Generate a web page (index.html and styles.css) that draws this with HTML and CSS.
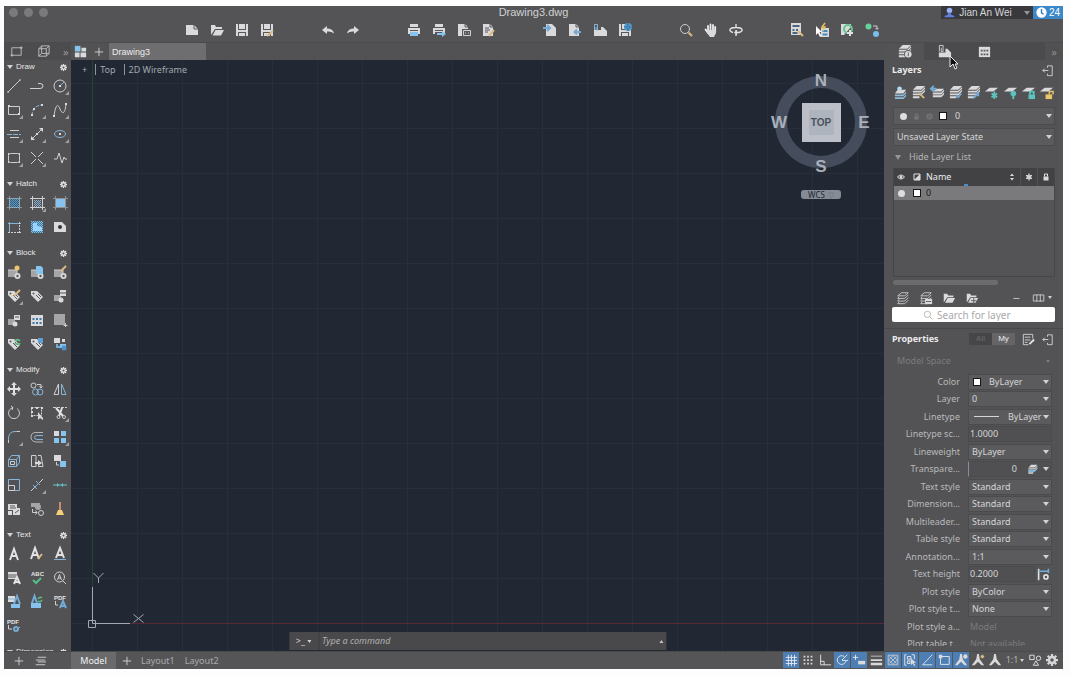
FILE: index.html
```
<!DOCTYPE html>
<html lang="en">
<head>
<meta charset="utf-8">
<title>Drawing3.dwg</title>
<link rel="stylesheet" href="styles.css">
</head>
<body>
<svg class="defs" aria-hidden="true">
  <symbol id="gear" viewBox="0 0 16 16"><circle cx="8" cy="8" r="4" fill="none" stroke="currentColor" stroke-width="3.4"/><path d="M8 0v3M8 13v3M0 8h3M13 8h3M2.3 2.3l2 2M11.7 11.7l2 2M13.7 2.3l-2 2M4.3 11.7l-2 2" stroke="currentColor" stroke-width="3"/></symbol>
  <symbol id="stack" viewBox="0 0 16 16"><path class="k" d="M6 2h8l-4 3.500H2zM3.500 6.500L2 8.500h8l4-4M3.500 9.500L2 11.500h8l4-4M3.500 12.500L2 14.500h8l4-4"/></symbol>
  <symbol id="stackf" viewBox="0 0 16 16"><path class="f" d="M6 1h9l-4 4H2zM2 6h9l4-4v2l-4 4H2zM2 9h9l4-4v2l-4 4H2zM2 12h7v2H2z"/></symbol>
  <symbol id="sheet1" viewBox="0 0 16 16"><path class="f" d="M6 3h9l-5 4H1z"/></symbol>
  <symbol id="tag" viewBox="0 0 16 16"><path class="f" d="M2 3h6l6 6-5 5-7-7z"/><circle class="h" cx="4.500" cy="5.500" r="1"/><path class="hs" d="M7 7l4 4M9 6l3 3"/></symbol>
  <symbol id="block" viewBox="0 0 16 16"><path class="m" d="M2 6h9v7H2z"/><circle class="f" cx="11.500" cy="12" r="3"/><circle class="h" cx="11.500" cy="12" r="1.200"/><path class="k" d="M2 6h9v4"/></symbol>
  <symbol id="floppy" viewBox="0 0 16 16"><path class="f" d="M2 2h12v12H2z"/><path class="h" d="M4 2h1v5h6V2h1v6H4zM4 10h8v4h-1v-3H5v3H4z"/></symbol>
  <symbol id="doc" viewBox="0 0 16 16"><path class="f" d="M2 2h7l3 3v9H2z"/><path class="hs" d="M9 2v3h3"/></symbol>
  <symbol id="printer" viewBox="0 0 16 16"><path class="f" d="M4 2h8v3H4zM2 6h12v6H2z"/><path class="h" d="M4 8h8v1H4z"/></symbol>
  <symbol id="pin" viewBox="0 0 16 16"><path class="k" d="M8 5V3h5v10.500H8v-2M9 8H3M5 6L3 8l2 2"/></symbol>
  <symbol id="hatchbox" viewBox="0 0 16 16"><path class="k" d="M3.500 1v14M13.500 1v14M1 3.500h15M1 12.500h15"/></symbol>
  <symbol id="person" viewBox="0 0 16 16"><path class="f" d="M7 1h2l1 6 5 7h-3L8 10l-4 4H1l5-7z"/></symbol>
  <pattern id="dots" width="2" height="2" patternUnits="userSpaceOnUse"><path d="M0 0h1v1H0zM1 1h1v1H1z" fill="#86b9dc"/></pattern>
</svg>

<div class="window">
  <header class="titlebar">
    <div class="lights"><span></span><span></span><span></span></div>
    <h1 class="doc-title">Drawing3.dwg</h1>
    <div class="account">
      <button class="user"><svg viewBox="0 0 16 16" class="ico12"><circle cx="8" cy="5" r="4" fill="#9ab0f0"/><path d="M6 8h4v3l5 2v2H1v-2l5-2z" fill="#5f7fe0"/></svg>Jian An Wei<i class="caret"></i></button>
      <button class="trial"><svg viewBox="0 0 16 16" class="ico12"><circle cx="8" cy="8" r="7.500" fill="#fff"/><path d="M8 3v5.500l3 2" fill="none" stroke="#2f80c2" stroke-width="2"/></svg>24</button>
    </div>
  </header>

  <nav class="toolbar" aria-label="Main toolbar">
    <div class="group">
      <button aria-label="New"><svg viewBox="0 0 16 16"><path class="f" d="M2 3h8l4 4v6H2z"/><path class="hs" d="M10 3v4h4"/></svg></button>
      <button aria-label="Open"><svg viewBox="0 0 16 16"><path class="f" d="M2 13V3h4l1 2h6v2H6zM6.500 8H15l-3 5.500H3.500z"/></svg></button>
      <button aria-label="Save"><svg viewBox="0 0 16 16"><use href="#floppy"/></svg></button>
      <button aria-label="Save as"><svg viewBox="0 0 16 16"><use href="#floppy"/><path class="ys" d="M8 14l6-5"/></svg></button>
    </div>
    <div class="group">
      <button aria-label="Undo"><svg viewBox="0 0 16 16"><path class="f" d="M2 8l5-4v2.500q6 0 7 5Q11 9 7 9.500V12z"/></svg></button>
      <button aria-label="Redo"><svg viewBox="0 0 16 16"><path class="f" d="M14 8L9 4v2.500q-6 0-7 5Q5 9 9 9.500V12z"/></svg></button>
    </div>
    <div class="group">
      <button aria-label="Print"><svg viewBox="0 0 16 16"><use href="#printer"/><path class="b" d="M4 10h8v4H4z"/></svg></button>
      <button aria-label="Batch plot"><svg viewBox="0 0 16 16"><use href="#printer"/><path class="h" d="M4 10h8v2H4z"/><path class="b" d="M6 11h5V9l4 3-4 3v-2H6z"/></svg></button>
      <button aria-label="Page setup"><svg viewBox="0 0 16 16"><use href="#doc"/><path class="h" d="M6 7h9v8H6z"/><path class="k" d="M7.500 8.500h7v5h-7zM9 11h1M12 11h1"/></svg></button>
      <button aria-label="Edit page"><svg viewBox="0 0 16 16"><use href="#doc"/><path class="hs" d="M4 6h4M4 8h5M4 10h3"/><path class="ys" d="M8 14l5-6"/></svg></button>
    </div>
    <div class="group">
      <button aria-label="Import"><svg viewBox="0 0 16 16"><path class="f" d="M4 2h6l4 4v8H4z"/><path class="bs2" d="M1 6h7M5 3l3 3-3 3"/></svg></button>
      <button aria-label="Export"><svg viewBox="0 0 16 16"><use href="#doc"/><path class="bs2" d="M7 10h7M10 7.500L7.500 10l2.500 2.500"/></svg></button>
      <button aria-label="Attach"><svg viewBox="0 0 16 16"><path class="f" d="M2 8h7V5h2l4 4v5H2z"/><path class="bs" d="M2.500 8V2.500h3V8H4V5"/></svg></button>
      <button aria-label="Save to web"><svg viewBox="0 0 16 16"><use href="#floppy"/><circle cx="11" cy="5" r="4" fill="#599bcb"/><path d="M7 5h8M11 1q-3 4 0 8 3-4 0-8" fill="none" stroke="#3c7cad"/></svg></button>
    </div>
    <div class="group">
      <button aria-label="Zoom"><svg viewBox="0 0 16 16"><circle class="k" cx="7" cy="7" r="4.500"/><path class="ys" d="M10.500 10.500L14 14"/></svg></button>
      <button aria-label="Pan"><svg viewBox="0 0 16 16"><path d="M5 10V4M7.500 9V2.500M10 9V3M12.200 10V5M5 11L2.500 7.500" fill="none" stroke="#eee" stroke-width="1.800" stroke-linecap="round"/><path class="f" d="M4 8h9v3l-2 4H7l-3-4z"/></svg></button>
      <button aria-label="Orbit"><svg viewBox="0 0 16 16"><path d="M5 10.500C0 9 1 5.500 8 5.500s8 3.500 3 5H7M9 8.500l-2 2 2 2M8 2v3M8 8v6" fill="none" stroke="#e2e2e3" stroke-width="1.400"/></svg></button>
    </div>
    <div class="group">
      <button aria-label="Sheet list"><svg viewBox="0 0 16 16"><path class="f" d="M2 1h10v12H2z"/><path d="M3.500 3h7v2h-7zM3.500 7h2v2h-2zM7 7h2v2H7zM3.500 10h5v2h-5z" fill="#4c6680"/><path class="ys" d="M9 9l5 5"/></svg></button>
      <button aria-label="Quick select"><svg viewBox="0 0 16 16"><path class="f" d="M7 6h8v9H7z"/><path d="M8.500 8h5v2h-5zM8.500 11.500h5v2h-5z" fill="#438cc0"/><path d="M11 1L8 5h3l-2 4" fill="none" stroke="#edc15d" stroke-width="1.500"/><path d="M2 4v9l2-2 2 4 1.500-1-2-4H8z" fill="#fff"/></svg></button>
      <button aria-label="Refresh"><svg viewBox="0 0 16 16"><path class="f" d="M2 2h10v3L5 13H2z"/><circle cx="9" cy="7" r="4" fill="none" stroke="#66c690" stroke-width="2"/><path class="k2" d="M11 8v6M8 11h6"/></svg></button>
      <button aria-label="Share"><svg viewBox="0 0 16 16"><circle cx="4.500" cy="4.500" r="3" fill="#66d29b"/><circle cx="12" cy="12" r="3" fill="#79bfec"/><path class="k" d="M9 4h4v3M11.500 6l1.500 1.500L14.500 6"/></svg></button>
    </div>
  </nav>

  <div class="work">
    <aside class="palette">
      <div class="tool-tabs">
        <button aria-label="2D tools"><svg viewBox="0 0 16 16"><path class="k" d="M3 4h10v8H3zM1.500 12h3M11.500 4h3M3 10.500v3M13 2.500v3"/></svg></button>
        <button aria-label="3D tools"><svg viewBox="0 0 16 16"><path class="k" d="M3 5h8v8H3zM3 5l3-3h8l-3 3M14 2v8l-3 3M6 2v8h8M6 10l-3 3"/></svg></button>
        <button class="more" aria-label="More">»</button>
      </div>
      <div class="sections">
        <section>
          <h2><i class="caret"></i>Draw<svg class="gear"><use href="#gear"/></svg></h2>
          <div class="tools">
            <button aria-label="Line"><svg viewBox="0 0 16 16"><path class="k" d="M2 14L14 2M1 14h2M13 2h2"/></svg></button>
            <button aria-label="Polyline"><svg viewBox="0 0 16 16"><path class="k" d="M1 10.500h10q3 0 3-2.500t-3-2.500H9"/></svg></button>
            <button class="fly" aria-label="Circle"><svg viewBox="0 0 16 16"><circle class="k" cx="8" cy="8" r="6"/><path class="bs" d="M8 8l4-4"/><path class="f" d="M7 7h2v2H7z"/></svg></button>
            <button class="fly" aria-label="Rectangle"><svg viewBox="0 0 16 16"><path class="k" d="M2.500 4.500h11v8h-11z"/><path class="f" d="M2 3h2v2H2zM12 11h2v2h-2z"/></svg></button>
            <button class="fly" aria-label="Arc"><svg viewBox="0 0 16 16"><path class="bs" d="M3 14Q3 4 13 3" stroke-dasharray="4 1"/><path class="f" d="M2 12h2v2H2zM4 6h2v2H4zM12 2h2v2h-2z"/></svg></button>
            <button class="fly" aria-label="Spline"><svg viewBox="0 0 16 16"><path class="k" d="M2 14C4 1 6 2 8 7s5 6 6-5"/><path class="f" d="M1 13h2v2H1zM13 1h2v2h-2z"/></svg></button>
            <button class="fly" aria-label="Construction line"><svg viewBox="0 0 16 16"><path class="k" d="M4 4.500h9M4 11.500h9"/><path class="bs" d="M1 8.500h14" stroke-dasharray="5 1"/></svg></button>
            <button class="fly" aria-label="Ray"><svg viewBox="0 0 16 16"><path class="k" d="M3 13L13 3"/><path class="f" d="M2 14v-4l4 4zM14 2v4l-4-4zM7 7h2v2H7z"/></svg></button>
            <button class="fly" aria-label="Ellipse"><svg viewBox="0 0 16 16"><ellipse class="bs" cx="8" cy="8" rx="5.500" ry="3.500"/><path class="f" d="M7 7h2v2H7z"/></svg></button>
            <button class="fly" aria-label="Region"><svg viewBox="0 0 16 16"><rect class="k" x="2.500" y="3.500" width="11" height="9" rx="2"/><path class="f" d="M2 3h1v2H2zM13 3h1v2h-1zM2 11h1v2H2zM13 11h1v2h-1z"/></svg></button>
            <button class="fly" aria-label="Point"><svg viewBox="0 0 16 16"><path class="k" d="M2 2l5 5M14 2L9 7M2 14l5-5M14 14L9 9"/></svg></button>
            <button aria-label="Break line"><svg viewBox="0 0 16 16"><path class="k" d="M2 9h3l2-6 3 10 2-6 1 2h2"/></svg></button>
          </div>
        </section>
        <section>
          <h2><i class="caret"></i>Hatch<svg class="gear"><use href="#gear"/></svg></h2>
          <div class="tools">
            <button aria-label="Hatch"><svg viewBox="0 0 16 16"><rect x="3" y="3" width="11" height="10" fill="#2f5f80"/><rect x="3" y="3" width="11" height="10" fill="url(#dots)" opacity=".6"/><use class="faint" href="#hatchbox"/></svg></button>
            <button class="fly" aria-label="Pick hatch"><svg viewBox="0 0 16 16"><rect x="5" y="5" width="7" height="7" fill="url(#dots)"/><use href="#hatchbox"/></svg></button>
            <button aria-label="Gradient"><svg viewBox="0 0 16 16"><path class="b" d="M4 4h9v8H4z"/><use class="faint" href="#hatchbox"/></svg></button>
            <button aria-label="Boundary"><svg viewBox="0 0 16 16"><path class="bs" d="M2 4.500h13M3.500 3v10"/><path class="k" d="M13.500 3v12M2 13.500h13" stroke-dasharray="2 1"/></svg></button>
            <button aria-label="Wipeout"><svg viewBox="0 0 16 16"><rect x="2" y="2" width="12" height="12" fill="#38799f"/><rect x="2" y="2" width="12" height="12" fill="url(#dots)"/><path d="M4 4h4v3l5 1v4H4z" fill="#9bd4ff"/></svg></button>
            <button aria-label="Revision cloud"><svg viewBox="0 0 16 16"><path class="f" d="M2 3h8l4 4v6H2z"/><circle cx="8" cy="8" r="2" fill="#333"/></svg></button>
          </div>
        </section>
        <section>
          <h2><i class="caret"></i>Block<svg class="gear"><use href="#gear"/></svg></h2>
          <div class="tools">
            <button aria-label="Create block"><svg viewBox="0 0 16 16"><use href="#block"/><circle cx="11" cy="4" r="2.500" fill="#efc56b"/></svg></button>
            <button aria-label="Insert block"><svg viewBox="0 0 16 16"><use href="#block"/><path class="b" d="M7 2h5l2 2v6H7z"/></svg></button>
            <button aria-label="Edit block"><svg viewBox="0 0 16 16"><use href="#block"/><path class="ys" d="M9 7l5-5"/></svg></button>
            <button class="fly" aria-label="Edit attribute"><svg viewBox="0 0 16 16"><use href="#tag"/><path class="ys" d="M8 8l6-6"/></svg></button>
            <button aria-label="Attribute"><svg viewBox="0 0 16 16"><use href="#tag"/></svg></button>
            <button aria-label="Extract"><svg viewBox="0 0 16 16"><path class="m" d="M2 7h7v6H2z"/><circle class="f" cx="9" cy="12" r="2.500"/><path class="f" d="M8 2h6v6H8z"/><path class="hs" d="M8 5h6"/></svg></button>
            <button aria-label="Write block"><svg viewBox="0 0 16 16"><path class="m" d="M2 7h7v6H2z"/><circle class="f" cx="9" cy="12" r="2.500"/><path class="f" d="M8 3h6v5H8z"/><path class="hs" d="M9 5h4"/></svg></button>
            <button aria-label="Table"><svg viewBox="0 0 16 16"><path class="f" d="M2 3h12v11H2z"/><path d="M3.500 6h2v2h-2zM7 6h2v2H7zM10.500 6h2v2h-2zM3.500 10h2v2h-2zM7 10h2v2H7zM10.500 10h2v2h-2z" fill="#3b78a3"/></svg></button>
            <button aria-label="Base point"><svg viewBox="0 0 16 16"><path class="m" d="M2 2h11v11H2z"/><path class="k" d="M13.500 11v4M11.500 13.500h4"/></svg></button>
            <button aria-label="Sync attributes"><svg viewBox="0 0 16 16"><use href="#tag"/><path d="M9 5a3 3 0 0 1 5 0M14 7a3 3 0 0 1-5 0" fill="none" stroke="#5fbc85" stroke-width="2"/></svg></button>
            <button aria-label="Manage attributes"><svg viewBox="0 0 16 16"><use href="#tag"/><path d="M9 2h5v5H9z" fill="#5c9fd0"/></svg></button>
            <button aria-label="Replace block"><svg viewBox="0 0 16 16"><path class="f" d="M2 2h6v5H2z"/><path class="bs2" d="M5 8v3h4"/><path class="f" d="M10 3h3v3h-3z"/><path class="b" d="M8 8h6v4H8z"/><circle cx="12" cy="12" r="2.500" fill="#4d94cb"/></svg></button>
          </div>
        </section>
        <section>
          <h2><i class="caret"></i>Modify<svg class="gear"><use href="#gear"/></svg></h2>
          <div class="tools">
            <button aria-label="Move"><svg viewBox="0 0 16 16"><path class="k2" d="M8 3v10M3 8h10"/><path class="f" d="M8 1l3 3H5zM8 15l3-3H5zM1 8l3-3v6zM15 8l-3-3v6z"/></svg></button>
            <button aria-label="Copy"><svg viewBox="0 0 16 16"><circle class="k" cx="4.500" cy="4.500" r="2.500"/><circle class="bs" cx="6.500" cy="11" r="3"/><circle class="bs" cx="11" cy="11" r="3"/><path class="k" d="M8 3.500h4v3M10.500 5l1.500 2 1.500-2"/></svg></button>
            <button aria-label="Mirror"><svg viewBox="0 0 16 16"><path class="k" d="M6.500 3L2 13.500h4.500z"/><path class="bs" d="M9.500 3L14 13.500H9.500z"/></svg></button>
            <button aria-label="Rotate"><svg viewBox="0 0 16 16"><path class="k" d="M11 3.500a5.500 5.500 0 1 1-6 0L7 2.500M5 1l2 1.500L6 5"/></svg></button>
            <button aria-label="Stretch"><svg viewBox="0 0 16 16"><path class="k" d="M2.500 2.500h10v8h-10z" stroke-dasharray="2 1"/><path class="f" d="M2 2h2v2H2zM7 2h2v2H7zM12 2h2v2h-2zM2 6h2v2H2zM2 10h2v2H2zM9 7v8l2-2 3 2v-2z"/></svg></button>
            <button class="fly" aria-label="Trim"><svg viewBox="0 0 16 16"><path class="k" d="M1 2.500h14" stroke-dasharray="3 1"/><path class="k2" d="M4 3l7 8M10 3l-3 8"/><circle class="k" cx="6.500" cy="12" r="1.500"/><circle class="k" cx="12" cy="12" r="1.500"/></svg></button>
            <button class="fly" aria-label="Fillet"><svg viewBox="0 0 16 16"><path class="bs" d="M2.500 14V9Q3 2.500 9 2.500h5"/><path class="k" d="M2.500 14v-3M11 2.500h3"/></svg></button>
            <button aria-label="Offset"><svg viewBox="0 0 16 16"><path class="k" d="M14 3.500H7Q2 3.500 2 8t5 5h7" opacity=".8"/><path class="bs" d="M14 6.500H8Q5.500 6.500 5.500 8.500T8 10.500h6"/></svg></button>
            <button class="fly" aria-label="Array"><svg viewBox="0 0 16 16"><path class="f" d="M2 2h5v5H2z"/><path class="b" d="M9 2h5v5H9zM2 9h5v5H2zM9 9h5v5H9z"/></svg></button>
            <button aria-label="Solid edit"><svg viewBox="0 0 16 16"><path class="bs" d="M2.500 6.500h8v7h-8zM2.500 6.500l3-4h8l-3 4M13.500 2.500v7l-3 4"/><path class="k" d="M4.500 8.500h4v3h-4z"/></svg></button>
            <button aria-label="Scale to"><svg viewBox="0 0 16 16"><path class="k" d="M2.500 2.500v11H7v-11zM9 2.500h3l2 11H9"/><path class="f" d="M6 9h3V7l4 3-4 3v-2H6z"/></svg></button>
            <button aria-label="Change space"><svg viewBox="0 0 16 16"><path class="f" d="M2 2h7v6H2z"/><path class="b" d="M8 8h6v6H8z"/><path class="k" d="M4.500 9v3H7"/></svg></button>
            <button aria-label="Scale"><svg viewBox="0 0 16 16"><path class="bs" d="M2.500 2.500h11v11h-11z"/><path class="k" d="M2.500 8.500h6v5h-6z"/></svg></button>
            <button class="fly" aria-label="Break"><svg viewBox="0 0 16 16"><path class="k" d="M2 14l4-4M10 6l4-4"/><path class="bs" d="M4 8l4 4M7 4l4 4M5 11l6-6"/></svg></button>
            <button aria-label="Join"><svg viewBox="0 0 16 16"><path d="M1 8h14" stroke="#64c7ba"/><path d="M5 6l2 2-2 2zM11 6L9 8l2 2z" fill="#6fc5d8"/></svg></button>
            <button aria-label="Draw order"><svg viewBox="0 0 16 16"><path class="f" d="M2 3h9v6H2z"/><path class="f" d="M7 7h7v7H7zM2 10h4v4H2z"/><path class="hs" d="M9 12l4-3M4 7h6M4 5h5"/></svg></button>
            <button aria-label="Explode"><svg viewBox="0 0 16 16"><path class="m" d="M2 2h9v4H2z"/><circle class="m" cx="9" cy="6" r="3"/><circle class="k" cx="12" cy="12" r="2.500"/><path class="k" d="M3.500 8v3.500H8M6.500 9.500l1.500 2-1.500 2"/></svg></button>
            <button aria-label="Purge"><svg viewBox="0 0 16 16"><path d="M8 1v8" stroke="#c88c71" stroke-width="2"/><path d="M6 9h4l2 5H4z" fill="#f3cf78"/></svg></button>
          </div>
        </section>
        <section>
          <h2><i class="caret"></i>Text<svg class="gear"><use href="#gear"/></svg></h2>
          <div class="tools">
            <button aria-label="Multiline text"><svg viewBox="0 0 16 16"><path class="k2" d="M4 14L8 3l4 11M5.500 10h5"/></svg></button>
            <button aria-label="Edit text"><svg viewBox="0 0 16 16"><path class="k2" d="M2 13L6 2l4 11M4 9h4"/><path class="ys" d="M9 13l4-5"/></svg></button>
            <button aria-label="Text style"><svg viewBox="0 0 16 16"><path class="k2" d="M4 12L8 2l4 10M5.500 9h5"/><path class="bs" d="M2 13.500h12"/></svg></button>
            <button aria-label="Align text"><svg viewBox="0 0 16 16"><path class="f" d="M2 2h9v7H2z"/><path class="hs" d="M2 5h9M2 7h9"/><path class="k2" d="M8 14l3-7 3 7M9 12h4"/></svg></button>
            <button aria-label="Spell check"><svg viewBox="0 0 16 16"><text x="2" y="6" class="mini">ABC</text><path d="M4 10l3 3 5-5" fill="none" stroke="#53bf87" stroke-width="2"/></svg></button>
            <button aria-label="Find text"><svg viewBox="0 0 16 16"><circle class="k" cx="7.500" cy="7" r="5"/><path class="k" d="M5.500 10l2-5.500 2 5.500M6 8h3M11 11l3 3"/></svg></button>
            <button aria-label="Text mask"><svg viewBox="0 0 16 16"><path class="f" d="M2 2h7v6H2z"/><path class="b" d="M5 10h9v4H5z"/><path class="bs2" d="M8 10l3-8 3 8"/><path class="bs" d="M2 5h7"/></svg></button>
            <button aria-label="Update field"><svg viewBox="0 0 16 16"><path class="b" d="M2 9h10v5H2z"/><path class="bs2" d="M3 9l2.500-7L8 9"/><path d="M9 5a2.500 2.500 0 0 1 4-1M13 6a2.500 2.500 0 0 1-4 1" fill="none" stroke="#58bc86" stroke-width="1.500"/></svg></button>
            <button aria-label="PDF text"><svg viewBox="0 0 16 16"><text x="2" y="6" class="mini">PDF</text><path class="k" d="M3.500 7v4H6"/><path class="bs2" d="M8 14l3-7 3 7M9 12h4"/></svg></button>
            <button aria-label="PDF import"><svg viewBox="0 0 16 16"><text x="1" y="6" class="mini">PDF</text><path class="k" d="M2.500 7v4H6"/><circle class="bs2" cx="10" cy="11" r="2"/><path class="bs" d="M10 13l4-4"/></svg></button>
          </div>
        </section>
        <section>
          <h2><i class="caret"></i>Dimension<svg class="gear"><use href="#gear"/></svg></h2>
        </section>
      </div>
    </aside>

    <main class="stage">
      <div class="file-tabs">
        <button aria-label="Start"><svg viewBox="0 0 16 16"><path class="b" d="M2 2h6v6H2z"/><path class="f" d="M9 4h5v4H9zM2 9h5v5H2zM8 9h6v5H8z"/></svg></button>
        <button aria-label="New tab"><svg viewBox="0 0 16 16"><path class="k" d="M8.500 4v9M4 8.500h9"/></svg></button>
        <button class="file-tab">Drawing3</button>
      </div>
      <div class="canvas">
        <div class="view-label"><span>+</span><span class="sep">Top</span><span class="sep">2D Wireframe</span></div>
        <div class="axis-y"></div>
        <div class="axis-x"></div>
        <svg class="ucs" viewBox="0 0 60 60"><path d="M9.500 10V46.500H47M5.500 43.500h7v7h-7zM10.500 -4l5 5 5-5M15.500 1v5M50.500 37.500l10 8M60.500 37.500l-10 8"/></svg>
        <svg class="compass" viewBox="0 0 104 126">
          <circle cx="52" cy="54" r="40" fill="none" stroke="#454d5d" stroke-width="12"/>
          <rect x="33" y="35" width="39" height="39" fill="#bdbfc8"/>
          <rect x="40" y="42" width="25" height="25" fill="#aeb4bd"/>
          <text x="52" y="58" class="cube">TOP</text>
          <text x="52" y="18">N</text><text x="52" y="104">S</text><text x="10" y="60">W</text><text x="95" y="60">E</text>
        </svg>
        <button class="wcs">WCS <span>▽</span></button>
        <form class="command">
          <button type="button" aria-label="Command options">&gt;_<i class="caret"></i></button>
          <input aria-label="Command" placeholder="Type a command">
          <i class="caret up"></i>
        </form>
      </div>
    </main>

    <aside class="panel">
      <div class="panel-tabs">
        <button class="on" aria-label="Layers panel"><svg viewBox="0 0 16 16"><use href="#stackf"/><circle class="h" cx="12" cy="11" r="4.500"/><circle class="f" cx="12" cy="11" r="3.500"/><path class="hs" d="M12 9v4"/></svg></button>
        <button aria-label="Attachments panel"><svg viewBox="0 0 16 16"><path class="f" d="M2 9h7V5h2l4 4v5H2z"/><path class="k" d="M2.500 8V1.500h4V8H4.500V4"/></svg></button>
        <button aria-label="Sheets panel"><svg viewBox="0 0 16 16"><path class="f" d="M2 3h12v11H2z"/><path class="h" d="M4 6h2v2H4zM7 6h2v2H7zM10 6h2v2h-2zM4 10h2v2H4zM7 10h2v2H7zM10 10h2v2h-2z"/></svg></button>
        <button class="more" aria-label="More panels">»</button>
      </div>
      <svg class="pointer" viewBox="0 0 10 15"><path d="M1 1v11l3-3 2 5 2-1-2-4h3z" fill="#111" stroke="#eee"/></svg>

      <section class="layers">
        <div class="head"><h2>Layers</h2><button aria-label="Undock"><svg viewBox="0 0 16 16"><use href="#pin"/></svg></button></div>
        <div class="layer-tools">
          <button aria-label="Match layer"><svg viewBox="0 0 16 16"><path d="M2 10h9l3-3v2l-3 3H2zM2 13h9l3-3v2l-3 3H2z" fill="#8dbbdc"/><path class="f" d="M5 5h9l-3 4H2z"/><circle cx="7" cy="4" r="2.500" fill="#b5d8ef"/></svg></button>
          <button aria-label="Clean layers"><svg viewBox="0 0 16 16"><use href="#stackf"/><path class="ys" d="M9 9l5 5"/></svg></button>
          <button aria-label="Previous layer"><svg viewBox="0 0 16 16"><path class="f" d="M7 4h8l-3 3H3zM3 8h9l3-3v2l-3 3H3zM3 11h9l3-3v2l-3 3H3z"/><path class="bs2" d="M1 4h6M4 1L1 4l3 3"/></svg></button>
          <button aria-label="Isolate"><svg viewBox="0 0 16 16"><use href="#stackf"/><path class="bs2" d="M9 11l2 2 3-4"/></svg></button>
          <button aria-label="Unisolate"><svg viewBox="0 0 16 16"><use href="#stackf"/><path class="bs2" d="M8 14l5-5M10 9h3v3"/></svg></button>
          <button aria-label="Freeze"><svg viewBox="0 0 16 16"><use href="#sheet1"/><path class="ts" d="M11 7v8M8 9l6 4M14 9l-6 4"/></svg></button>
          <button aria-label="Turn off"><svg viewBox="0 0 16 16"><use href="#sheet1"/><circle class="t" cx="11" cy="9" r="3"/><path class="t" d="M10 11h2v4h-2z"/></svg></button>
          <button aria-label="Lock"><svg viewBox="0 0 16 16"><use href="#sheet1"/><path class="t" d="M8 10h7v5H8z"/><path class="ts" d="M9.500 10V7h4v3"/></svg></button>
          <button aria-label="Unlock"><svg viewBox="0 0 16 16"><use href="#sheet1"/><path d="M7 10h7v5H7z" fill="#e9c66a"/><path d="M11 10V7h4v3" fill="none" stroke="#e9c66a" stroke-width="1.500"/></svg></button>
        </div>
        <div class="field layer-pick">
          <span class="dot"></span>
          <svg class="dimico" viewBox="0 0 16 16"><path class="f" d="M3 7h10v8H3z"/><path class="k2" d="M5 7V2h6v5"/></svg>
          <svg class="dimico"><use href="#gear"/></svg>
          <span class="swatch"></span>
          <select aria-label="Current layer"><option>0</option></select><i class="caret"></i>
        </div>
        <div class="field state"><select aria-label="Layer state"><option>Unsaved Layer State</option></select><i class="caret"></i></div>
        <button class="hide-list"><i class="caret"></i>Hide Layer List</button>
        <div class="layer-list">
          <table>
            <thead><tr>
              <th class="c-eye"><svg viewBox="0 0 16 16"><path class="k2" d="M1 8q7-8 14 0-7 8-14 0z"/><circle class="f" cx="8" cy="8" r="3"/></svg></th>
              <th class="c-sw"><svg viewBox="0 0 16 16"><path class="k2" d="M2 2h12v12H2z"/><path class="f" d="M14 2v12H2z"/></svg></th>
              <th class="c-name"><span>Name</span></th>
              <th class="c-sort"><svg viewBox="0 0 16 16"><path class="f" d="M8 1l4 5H4zM8 15l4-5H4z"/></svg></th>
              <th class="c-ico"><svg viewBox="0 0 16 16"><path class="k2" d="M8 1v14M2 4.500l12 7M14 4.500l-12 7"/><circle class="k2" cx="8" cy="8" r="4"/></svg></th>
              <th class="c-ico"><svg viewBox="0 0 16 16"><path class="f" d="M3 7h10v8H3z"/><path class="k2" d="M5 7V2h6v5"/></svg></th>
            </tr></thead>
            <tbody><tr><td><span class="dot"></span></td><td><span class="swatch"></span></td><td colspan="4">0</td></tr></tbody>
          </table>
        </div>
        <div class="scroll"><span></span></div>
        <div class="list-tools">
          <button aria-label="New layer"><svg viewBox="0 0 16 16"><use href="#stack"/></svg></button>
          <button aria-label="Layer settings"><svg viewBox="0 0 16 16"><use href="#stack"/><path class="f" d="M7 9h8v6H7z"/><path class="hs" d="M8 12h6"/></svg></button>
          <button aria-label="Open state"><svg viewBox="0 0 16 16"><path class="f" d="M2 13V3h4l1 2h6v2H6zM6.500 8H15l-3 5.500H3.500z"/></svg></button>
          <button aria-label="New group"><svg viewBox="0 0 16 16"><path class="f" d="M2 13V3h4l1 2h6v2H6zM6.500 8H15l-3 5.500H3.500z"/><path class="hs" d="M10 8v6M7 11h6"/></svg></button>
          <span class="grow"></span>
          <button aria-label="Remove layer"><svg viewBox="0 0 16 16"><path class="k" d="M5 8.500h7"/></svg></button>
          <button class="cols" aria-label="Columns"><svg viewBox="0 0 16 16"><path class="k" d="M1.500 4.500h12v7h-12zM5.500 4v8M9.500 4v8"/></svg><i class="caret"></i></button>
        </div>
        <label class="search"><svg viewBox="0 0 16 16"><circle cx="7" cy="7" r="5" fill="none" stroke="#aaa" stroke-width="1.300"/><path d="M11 11l4 4" stroke="#aaa" stroke-width="1.300"/></svg><input aria-label="Search for layer" placeholder="Search for layer"></label>
      </section>

      <section class="props">
        <div class="head"><h2>Properties</h2>
          <div class="seg"><button>All</button><button class="on">My</button></div>
          <button aria-label="Customize"><svg viewBox="0 0 16 16"><path class="k" d="M12.500 7V2.500h-10v11H8M4 5.500h6M4 8.500h6M4 11h3"/><path class="k2" d="M9 13l5-5"/></svg></button>
          <button aria-label="Undock"><svg viewBox="0 0 16 16"><use href="#pin"/></svg></button>
        </div>
        <div class="space"><select aria-label="Object type" disabled><option>Model Space</option></select><i class="caret"></i></div>
        <div class="rows">
          <div class="row"><label for="p1">Color</label><div class="field"><span class="swatch"></span><select id="p1"><option>ByLayer</option></select><i class="caret"></i></div></div>
          <div class="row"><label for="p2">Layer</label><div class="field"><select id="p2"><option>0</option></select><i class="caret"></i></div></div>
          <div class="row"><label for="p3">Linetype</label><div class="field"><span class="rule"></span><select id="p3"><option>ByLayer</option></select><i class="caret"></i></div></div>
          <div class="row"><label for="p4">Linetype sc...</label><div class="field in"><input id="p4" value="1.0000"></div></div>
          <div class="row"><label for="p5">Lineweight</label><div class="field"><select id="p5"><option>ByLayer</option></select><i class="caret"></i></div></div>
          <div class="row"><label for="p6">Transpare...</label><div class="field in slide"><input id="p6" class="right" value="0"><svg class="lay" viewBox="0 0 16 16"><use href="#stackf"/><path d="M2 9h9l4-4v2l-4 5H2z" fill="#79b3dc"/></svg><i class="caret"></i></div></div>
          <div class="row"><label for="p7">Text style</label><div class="field"><select id="p7"><option>Standard</option></select><i class="caret"></i></div></div>
          <div class="row"><label for="p8">Dimension...</label><div class="field"><select id="p8"><option>Standard</option></select><i class="caret"></i></div></div>
          <div class="row"><label for="p9">Multileader...</label><div class="field"><select id="p9"><option>Standard</option></select><i class="caret"></i></div></div>
          <div class="row"><label for="p10">Table style</label><div class="field"><select id="p10"><option>Standard</option></select><i class="caret"></i></div></div>
          <div class="row"><label for="p11">Annotation...</label><div class="field"><select id="p11"><option>1:1</option></select><i class="caret"></i></div></div>
          <div class="row"><label for="p12">Text height</label><div class="field in"><input id="p12" value="0.2000"></div><button class="measure" aria-label="Pick height"><svg viewBox="0 0 16 16"><path class="k2" d="M2 1v14"/><path class="bs2" d="M2 4h12M14 1v5"/><circle class="k2" cx="11" cy="11" r="2.500"/></svg></button></div>
          <div class="row"><label for="p13">Plot style</label><div class="field"><select id="p13"><option>ByColor</option></select><i class="caret"></i></div></div>
          <div class="row"><label for="p14">Plot style t...</label><div class="field"><select id="p14"><option>None</option></select><i class="caret"></i></div></div>
          <div class="row"><label for="p15">Plot style a...</label><div class="field off"><input id="p15" value="Model" disabled></div></div>
          <div class="row"><label for="p16">Plot table t...</label><div class="field off"><input id="p16" value="Not available" disabled></div></div>
        </div>
      </section>
    </aside>
  </div>

  <footer class="status">
    <div class="foot-left">
      <button aria-label="Add tool set"><svg viewBox="0 0 16 16"><path class="k" d="M8.500 4v9M4 8.500h9"/></svg></button>
      <button aria-label="Tool sets"><svg viewBox="0 0 16 16"><path class="k" d="M5 4.500h9M3 7.500h10M5 9.500h9M3 12.500h10"/></svg></button>
    </div>
    <nav class="layouts"><button class="on">Model</button><button class="add" aria-label="New layout"><svg viewBox="0 0 16 16"><path class="k" d="M8.500 4v9M4 8.500h9"/></svg></button><button>Layout1</button><button>Layout2</button></nav>
    <div class="modes">
      <button class="on" aria-label="Grid"><svg viewBox="0 0 16 16"><path class="w" d="M5 2v13M8.500 2v13M12 2v13M2 5h13M2 8.500h13M2 12h13"/></svg></button>
      <button aria-label="Snap"><svg viewBox="0 0 16 16"><path class="f" d="M3 3h2v2H3zM7 3h2v2H7zM11 3h2v2h-2zM3 7h2v2H3zM7 7h2v2H7zM11 7h2v2h-2zM3 11h2v2H3zM7 11h2v2H7zM11 11h2v2h-2z"/></svg></button>
      <button aria-label="Ortho"><svg viewBox="0 0 16 16"><path class="w" d="M3 2v11.500h12M3 9.500h4v4"/></svg></button>
      <button class="on" aria-label="Polar"><svg viewBox="0 0 16 16"><path class="w" d="M12.500 9a5 5 0 1 1-2-5M8 8l6-6M8 8.500h7"/></svg></button>
      <button class="on" aria-label="Dynamic input"><svg viewBox="0 0 16 16"><path class="w" d="M4 2v6M1 5h6"/><path class="f" d="M7 9h8v4H7z"/></svg></button>
      <button aria-label="Lineweight"><svg viewBox="0 0 16 16"><path class="f" d="M2 3h13v1H2zM2 7h13v2H2zM2 11h13v3H2z"/></svg></button>
      <button class="on" aria-label="Transparency"><svg viewBox="0 0 16 16"><path class="k" d="M2.500 2.500h11v11h-11zM4 4l8 8M8 3l5 5M3 8l5 5M12 4l-8 8M8 3L3 8M13 8l-5 5"/></svg></button>
      <button class="on" aria-label="Selection cycling"><svg viewBox="0 0 16 16"><path class="w" d="M4 2H2v12h2M10 2h3v5M5 4h4v3H5zM5 9h3v3H5z"/><path class="f" d="M9 6v8l2-2 2 3 1-1-2-3h3z"/></svg></button>
      <button class="on" aria-label="Angle snap"><svg viewBox="0 0 16 16"><path class="w" d="M14 2L3 13.500h11"/></svg></button>
      <button class="on" aria-label="Object snap"><svg viewBox="0 0 16 16"><path class="w" d="M4 4h10v9H4z"/><path class="f" d="M2 2h4v4H2z"/></svg></button>
      <button class="on" aria-label="Annotation visibility"><svg viewBox="0 0 16 16"><use href="#person"/><circle class="f" cx="13" cy="4" r="2.500"/></svg></button>
      <button aria-label="Auto scale"><svg viewBox="0 0 16 16"><use href="#person"/><path class="ys" d="M11 4h4M13 2v4"/></svg></button>
      <button aria-label="Annotation scale"><svg viewBox="0 0 16 16"><use href="#person"/></svg></button>
      <button class="scale">1:1<i class="caret"></i></button>
      <button aria-label="Isolate objects"><svg viewBox="0 0 16 16"><path class="w" d="M2 2.500h5v5H2zM9 9l3 5H6z"/><circle class="w" cx="12" cy="6" r="2.500"/></svg></button>
      <button aria-label="Settings"><svg class="big"><use href="#gear"/></svg></button>
    </div>
  </footer>
</div>
</body>
</html>
```
FILE: styles.css
```
* { box-sizing: border-box; }
html, body { height: 100%; }
body {
  margin: 0;
  padding: 6px 7px 6px 4px;
  background: #fdfdfe;
  color: #d6d6d8;
  font: 9px/12px "Noto Sans", "Open Sans", sans-serif;
  overflow: hidden;
}
h1, h2 { margin: 0; font-weight: 400; }
button, input, select {
  font: inherit;
  color: inherit;
  margin: 0;
  padding: 0;
  border: 0;
  background: none;
  outline: 0;
  appearance: none;
  min-width: 0;
}
button { display: inline-flex; align-items: center; justify-content: center; }
svg { display: block; width: 16px; height: 16px; flex: none; overflow: visible; }
.defs { position: absolute; width: 0; height: 0; }

/* icon paints */
.k, .k2, .w, .bs, .bs2, .ys, .ts, .hs { fill: none; stroke-width: 1px; }
.k { stroke: #cfcfd1; }
.k2 { stroke-width: 2px; stroke: #e2e2e3; }
.w { stroke: #ececee; }
.bs { stroke: #86b4d8; }
.bs2 { stroke-width: 2px; stroke: #72abd6; }
.ys { stroke: #dcb982; stroke-width: 2px; }
.ts { stroke: #5cc3bd; stroke-width: 2px; }
.hs { stroke: #58585a; }
.f { fill: #dadadc; stroke: none; }
.b { fill: #86c3ee; }
.m { fill: #a5a5a7; }
.t { fill: #5cc3bd; }
.h { fill: #58585a; }
.faint { opacity: .5; }
.mini { font: bold 6px "Liberation Sans", sans-serif; fill: #e4e4e4; }

.caret {
  flex: none;
  width: 0;
  height: 0;
  border: 3px solid transparent;
  border-top: 4px solid #d2d2d4;
  border-bottom: 0;
}
.caret.up { border-top: 0; border-bottom: 4px solid #c2c2c4; }

.window { height: 100%; display: flex; flex-direction: column; background: #545456; }

/* title bar */
.titlebar { flex: none; height: 13px; display: grid; grid-template-columns: 1fr auto 1fr; }
.lights { display: flex; align-items: center; gap: 6px; padding-left: 5px; }
.lights span { width: 9px; height: 9px; border-radius: 50%; background: #7a7a7c; }
.doc-title { font: 11px/13px "Liberation Sans", sans-serif; color: #d0d0d2; }
.account { justify-self: end; display: flex; font: 10px/13px "Liberation Sans", sans-serif; }
.user { width: 92px; gap: 4px; background: #39393d; }
.user .caret { margin-left: 8px; border-top-color: #969698; }
.trial { width: 30px; gap: 2px; background: #3a88c8; color: #fff; }
.ico12 { width: 11px; height: 11px; }

.toolbar { flex: none; height: 24px; display: flex; justify-content: center; align-items: center; gap: 45px; border-bottom: 1px solid #4b4b4d; padding: 0 4px 2px 0; }
.group { display: flex; gap: 9px; }

.work { flex: 1; min-height: 0; display: flex; }

/* tool palette */
.palette { flex: none; width: 67px; display: flex; flex-direction: column; background: #525254; }
.tool-tabs { flex: none; height: 17px; display: flex; gap: 12px; background: #4c4c4e; padding-left: 5px; }
.tool-tabs svg { width: 15px; height: 15px; }
.tool-tabs button { opacity: .85; }
.more { font-size: 11px; color: #a5a5a7; }
.sections { flex: 1; min-height: 0; overflow: hidden; }
.sections section { padding-bottom: 7px; }
.sections h2 { height: 14px; display: flex; align-items: center; gap: 3px; padding: 0 4px 0 3px; font: 8px/14px "Liberation Sans", sans-serif; color: #e6e6e8; }
.gear { width: 7px; height: 7px; margin-left: auto; }
.tools { display: grid; grid-template-columns: repeat(3, 16px); grid-auto-rows: 24px; column-gap: 7px; padding-left: 2px; }
.tools button { position: relative; }
.fly::after { content: ""; position: absolute; right: -1px; bottom: 3px; border: 2px solid #a0a0a2; border-top-color: transparent; border-left-color: transparent; }

/* drawing area */
.stage { flex: 1; min-width: 0; display: flex; flex-direction: column; }
.file-tabs { flex: none; height: 17px; display: flex; gap: 3px; padding-left: 2px; background: #525254; }
.file-tabs svg { width: 15px; height: 15px; }
.file-tab { width: 97px; justify-content: flex-start; padding-left: 3px; background: #6e6e70; color: #ededee; font-family: "Liberation Sans", sans-serif; }
.canvas {
  flex: 1;
  position: relative;
  overflow: hidden;
  background-color: #212833;
  background-image: linear-gradient(90deg, #27303a 1px, transparent 1px), linear-gradient(0deg, #27303a 1px, transparent 1px);
  background-size: 45px 45px;
  background-position: 21px 0, 0 calc(100% - 27px);
}
.view-label { display: flex; padding: 4px 0 0 11px; color: #a2a9b2; }
.view-label .sep { border-left: 1px solid #8d949d; padding-left: 4px; margin-left: 8px; height: 11px; line-height: 12px; }
.axis-y { position: absolute; left: 21px; top: 0; bottom: 27px; width: 1px; background: #25452f; }
.axis-x { position: absolute; left: 21px; right: 0; bottom: 27px; height: 1px; background: #5a2833; }
.ucs { position: absolute; left: 12px; bottom: 14px; width: 60px; height: 60px; fill: none; stroke: #a3a9b1; }
.compass { position: absolute; right: 11px; top: 8px; width: 104px; height: 126px; fill: #aab0ba; font: bold 17px "Liberation Sans", sans-serif; text-anchor: middle; }
.cube { fill: #4a515c; font-size: 10px; }
.wcs { position: absolute; right: 43px; top: 130px; width: 40px; height: 9px; gap: 3px; border-radius: 3px; background: #868c95; color: #20262f; font-size: 8px; line-height: 9px; }
.wcs span { color: #6d737d; }
.command { position: absolute; left: 50%; bottom: 1px; width: 46.4%; height: 18px; transform: translateX(-50%); display: flex; align-items: center; background: #49484b; padding-right: 3px; }
.command button { width: 30px; height: 100%; gap: 2px; border-right: 1px solid #3d3d40; }
.command .caret { border-width: 3px 2px 0; }
.command .caret.up { border-width: 0 2px 3px; }
.command input { flex: 1; padding-left: 3px; font-style: italic; }
.command input::placeholder { color: #b0b0b2; }

/* right panel */
.panel { flex: none; width: 179px; position: relative; display: flex; flex-direction: column; background: #535355; padding-bottom: 5px; overflow: hidden; }
.panel-tabs { flex: none; height: 17px; display: flex; background: #4b4b4d; }
.panel-tabs button { width: 40px; }
.panel-tabs .on { background: #535355; }
.panel-tabs svg { width: 15px; height: 15px; }
.panel-tabs .more { width: 18px; margin-left: auto; background: #515153; color: #8d8d8f; }
.pointer { position: absolute; left: 65px; top: 12px; width: 10px; height: 15px; }
.head { display: flex; align-items: center; height: 20px; }
.head h2 { font-size: 9px; font-weight: 700; margin-right: auto; color: #ececee; }
.head svg { width: 15px; height: 15px; }
.layers { flex: none; padding: 0 8px 6px; display: flex; flex-direction: column; border-bottom: 1px solid #48484a; }
.layers .head { padding-right: 0; }
.layer-tools { display: flex; justify-content: space-between; height: 24px; padding: 0 1px; }
.layer-tools svg { width: 15px; height: 15px; }
.field { flex: 1; min-width: 0; display: flex; align-items: center; height: 16px; background: #5b5b5d; border: 1px solid #4b4b4d; padding-right: 2px; }
.field select, .field input { flex: 1; height: 14px; line-height: 14px; padding-left: 4px; }
.field .caret { border-width: 4px 3px 0; }
.cols .caret, .space .caret { border-width: 3px 2px 0; }
.layer-pick, .state { flex: none; height: 18px; margin-left: 1px; }
.layer-pick { margin-top: 3px; gap: 6px; padding-left: 6px; }
.layer-pick select { padding-left: 2px; }
.state { margin-top: 3px; }
.state select { padding-left: 3px; }
.dot { flex: none; display: block; width: 7px; height: 7px; border-radius: 50%; background: #dededf; }
.swatch { flex: none; display: block; width: 8px; height: 8px; background: #fff; border: 1px solid #171717; }
.dimico { width: 7px; height: 7px; opacity: .2; }
.hide-list { justify-content: flex-start; gap: 8px; height: 22px; padding-left: 3px; color: #b5b5b7; }
.hide-list .caret { border-top-color: #969698; border-top-width: 5px; }
.layer-list { height: 109px; margin-left: 1px; border: 1px solid #464648; border-top: 0; background: #545456; }
table { width: 100%; border-collapse: collapse; table-layout: fixed; }
th, td { padding: 0; text-align: left; vertical-align: middle; }
th { height: 18px; background: #424244; font-weight: 400; color: #ececee; }
th svg { width: 8px; height: 8px; margin: auto; }
td { height: 14px; background: #7a7a7c; color: #1b1b1d; line-height: 14px; }
td .dot, td .swatch { margin: auto; }
.c-eye { width: 14px; }
.c-sw { width: 18px; }
.c-name { background: linear-gradient(#4b8bc8, #4b8bc8) 38px 100% / 4px 2px no-repeat #424244; }
.c-sort { width: 16px; }
.c-ico { width: 17px; border-left: 1px solid #525254; }
.scroll { padding: 3px 0 0 1px; }
.scroll span { display: block; width: 65%; height: 5px; border-radius: 3px; background: #6c6c6e; }
.list-tools { display: flex; align-items: center; gap: 9px; height: 22px; padding: 3px 3px 0 4px; }
.list-tools svg { width: 14px; height: 14px; }
.grow { flex: 1; }
.cols { gap: 2px; }
.search { display: flex; align-items: center; gap: 4px; height: 15px; border-radius: 2px; background: #fff; padding-left: 31px; }
.search svg { width: 10px; height: 10px; }
.search input { flex: 1; font-size: 10px; color: #555; }
.search input::placeholder { color: #a9a9ab; }
.props { flex: 1; min-height: 0; display: flex; flex-direction: column; overflow: hidden; padding: 0 8px; }
.props .head { flex: none; gap: 4px; }
.seg { display: flex; height: 12px; margin-right: 2px; font: 8px/12px "Liberation Sans", sans-serif; }
.seg button { width: 23px; background: #464648; color: #6c6c6e; }
.seg .on { background: #656567; color: #ededee; }
.space { flex: none; display: flex; align-items: center; height: 24px; padding: 0 5px; color: #7b7b7d; }
.space select { flex: 1; opacity: 1; color: #7b7b7d; }
.space .caret { border-top-color: #7b7b7d; }
.row { display: flex; align-items: center; height: 17px; padding-right: 3px; }
.row:nth-child(even) { height: 18px; }
.row label { width: 68px; margin-right: 8px; text-align: right; color: #b9b9bb; white-space: nowrap; }
.row .field select { padding-left: 3px; }
.row .swatch { margin: 0 5px 0 4px; }
.row .rule { width: 25px; height: 1px; margin: 0 6px 0 5px; background: #d6d6d8; }
.row .in { background: #505052; padding-right: 2px; }
.row .in input { padding-left: 1px; }
.row .slide { border-left-color: #8a8a9c; }
.field .right { text-align: right; }
.lay { width: 11px; height: 11px; margin: 0 5px 0 10px; }
.measure { width: 17px; }
.measure svg { width: 13px; height: 13px; }
.row .off { border-color: transparent; background: none; color: #7b7b7d; }
.row .off input { padding-left: 1px; }

/* status bar */
.status { flex: none; height: 18px; display: flex; background: #555557; border-top: 1px solid #4a4a4c; }
.foot-left { width: 67px; display: flex; align-items: center; gap: 7px; padding-left: 7px; }
.foot-left svg, .layouts svg { width: 15px; height: 15px; }
.layouts { display: flex; color: #aaaaac; }
.layouts button { padding: 0 5px; }
.layouts .on { width: 45px; background: #6a6a6c; color: #f0f0f1; }
.layouts .add { width: 20px; padding: 0; }
.modes { margin-left: auto; display: flex; gap: 1px; padding-right: 3px; }
.modes button { width: 16px; height: 16px; }
.modes svg { width: 14px; height: 14px; }
.modes .big { width: 12px; height: 12px; }
.modes .on { background: #4e7fb4; }
.modes .scale { width: 22px; gap: 2px; color: #b0b0b2; }
.modes .scale .caret { border-width: 3px 2px 0; }
```
